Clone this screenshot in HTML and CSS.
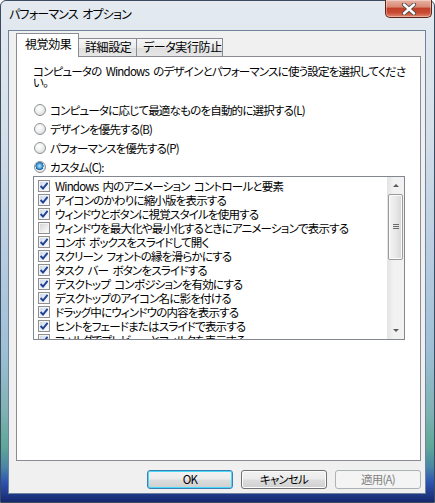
FILE: index.html
```html
<!DOCTYPE html>
<html lang="ja">
<head>
<meta charset="utf-8">
<title>パフォーマンス オプション</title>
<link rel="stylesheet" href="styles.css">
</head>
<body>
<div class="window">
  <div class="titlebar">
    <span class="title">パフォーマンス オプション</span>
    <div class="close">
      <svg width="20" height="12" viewBox="0 0 20 12">
        <path d="M5 1.5 L15 10.5 M15 1.5 L5 10.5" stroke="#4a4a4a" stroke-width="4.2" stroke-linecap="round" fill="none"/>
        <path d="M5 1.5 L15 10.5 M15 1.5 L5 10.5" stroke="#ffffff" stroke-width="2.4" stroke-linecap="round" fill="none"/>
      </svg>
    </div>
  </div>
  <div class="client">
    <div class="tabs">
      <div class="tab active">視覚効果</div>
      <div class="tab">詳細設定</div>
      <div class="tab">データ実行防止</div>
    </div>
    <div class="panel">
      <p class="desc"><span class="line">コンピュータの Windows のデザインとパフォーマンスに使う設定を選択してくださ</span><span class="line">い。</span></p>
      <div class="radios">
        <div class="radio-row"><span class="radio"></span><span>コンピュータに応じて最適なものを自動的に選択する(L)</span></div>
        <div class="radio-row"><span class="radio"></span><span>デザインを優先する(B)</span></div>
        <div class="radio-row"><span class="radio"></span><span>パフォーマンスを優先する(P)</span></div>
        <div class="radio-row"><span class="radio on"></span><span>カスタム(C):</span></div>
      </div>
      <div class="listbox">
        <div class="items">
          <div class="item"><span class="check on"></span><span>Windows 内のアニメーション コントロールと要素</span></div>
          <div class="item"><span class="check on"></span><span>アイコンのかわりに縮小版を表示する</span></div>
          <div class="item"><span class="check on"></span><span>ウィンドウとボタンに視覚スタイルを使用する</span></div>
          <div class="item"><span class="check"></span><span>ウィンドウを最大化や最小化するときにアニメーションで表示する</span></div>
          <div class="item"><span class="check on"></span><span>コンボ ボックスをスライドして開く</span></div>
          <div class="item"><span class="check on"></span><span>スクリーン フォントの縁を滑らかにする</span></div>
          <div class="item"><span class="check on"></span><span>タスク バー ボタンをスライドする</span></div>
          <div class="item"><span class="check on"></span><span>デスクトップ コンポジションを有効にする</span></div>
          <div class="item"><span class="check on"></span><span>デスクトップのアイコン名に影を付ける</span></div>
          <div class="item"><span class="check on"></span><span>ドラッグ中にウィンドウの内容を表示する</span></div>
          <div class="item"><span class="check on"></span><span>ヒントをフェードまたはスライドで表示する</span></div>
          <div class="item"><span class="check on"></span><span>フォルダでプレビューとフィルタを表示する</span></div>
        </div>
        <div class="scrollbar">
          <div class="arrow up"></div>
          <div class="thumb"><span class="grip"></span></div>
          <div class="track"></div>
          <div class="arrow down"></div>
        </div>
      </div>
    </div>
    <div class="buttons">
      <div class="btn default">OK</div>
      <div class="btn">キャンセル</div>
      <div class="btn disabled">適用(A)</div>
    </div>
  </div>
</div>
</body>
</html>
```

FILE: styles.css
```css
* { box-sizing: border-box; }
html, body { margin: 0; padding: 0; }
body {
  width: 435px;
  height: 503px;
  overflow: hidden;
  font-family: "Noto Sans CJK JP", "Noto Sans", sans-serif;
  font-size: 11.5px;
  letter-spacing: -0.8px;
  word-spacing: 2.5px;
  color: #000;
  font-feature-settings: "palt";
}
.window {
  width: 435px;
  height: 503px;
  padding: 0 8px 8px 7px;
  border: 1px solid #3b4c62;
  border-radius: 6px 6px 0 0;
  background: linear-gradient(180deg,
    #e4eaf0 0%, #d6e0e9 25%, #b9cde0 50%, #9dbfd6 70%,
    #7fb2b2 82%, #5ea797 89%, #4b86a6 93%, #2f55b0 96%, #16286f 100%);
  display: flex;
  flex-direction: column;
}
.titlebar {
  height: 29px;
  display: flex;
  justify-content: space-between;
  align-items: flex-start;
}
.title {
  margin-top: 5px;
  margin-left: 1px;
  line-height: 16px;
  font-size: 12px;
  color: #000;
}
.close {
  width: 47px;
  height: 18px;
  margin-right: -6px;
  margin-top: -1px;
  border: 1px solid #5e2518;
  border-top: none;
  border-radius: 0 0 5px 5px;
  background: linear-gradient(180deg, #e8b2a4 0%, #d98a74 40%, #c2402a 50%, #c94b33 75%, #e08a6e 100%);
  box-shadow: inset 0 0 0 1px rgba(255,255,255,0.35);
  display: flex;
  align-items: center;
  justify-content: center;
}
.client {
  flex: 1;
  background: #f0f0f0;
  border: 1px solid #6f849c;
  display: flex;
  flex-direction: column;
  padding: 2px 6px 0 7px;
}
.tabs {
  display: flex;
  align-items: flex-end;
  height: 23px;
  position: relative;
  z-index: 1;
}
.tab {
  height: 18px;
  line-height: 16px;
  padding: 0 6px;
  border: 1px solid #898c95;
  border-bottom: none;
  border-left: none;
  background: linear-gradient(180deg, #f6f6f6 0%, #ebebeb 50%, #dedede 51%, #e6e6e6 100%);
  white-space: nowrap;
  font-size: 12px;
  letter-spacing: -0.4px;
}
.tab.active {
  height: 24px;
  margin-bottom: -1px;
  line-height: 20px;
  border-left: 1px solid #898c95;
  background: #fff;
  padding: 0 8px 0 8px;
  width: 63px;
}
.tab:nth-child(2) { width: 58px; }
.tab:nth-child(3) { width: 86px; }
.panel {
  width: 405px;
  height: 405px;
  background: #fff;
  border: 1px solid #898c95;
  padding: 0 0 0 16px;
}
.desc {
  margin: 9px 0 0 0;
  line-height: 11px;
}
.desc .line {
  display: block;
  white-space: nowrap;
  height: 11px;
}
.radios {
  margin-top: 12px;
  display: flex;
  flex-direction: column;
}
.radio-row {
  height: 19px;
  display: flex;
  align-items: center;
  gap: 4px;
  padding-left: 1px;
  white-space: nowrap;
  line-height: 14px;
}
.radio {
  width: 12px;
  height: 12px;
  border-radius: 50%;
  border: 1px solid #8f9396;
  background: radial-gradient(circle at 40% 35%, #ffffff 0%, #f0f0f0 45%, #c9cbcd 100%);
  flex: none;
}
.radio.on {
  background:
    radial-gradient(circle at 45% 40%, #bfe6fb 0%, #4aa3da 30%, #1c5ca3 48%, transparent 52%),
    radial-gradient(circle at 40% 35%, #ffffff 0%, #eeeeee 50%, #cfd1d3 100%);
}
.listbox {
  width: 372px;
  height: 164px;
  border: 1px solid #828790;
  display: flex;
  overflow: hidden;
  background: #fff;
}
.items {
  flex: 1;
  padding-top: 2px;
  padding-left: 4px;
  overflow: hidden;
}
.item {
  height: 14px;
  display: flex;
  align-items: center;
  gap: 5px;
  white-space: nowrap;
  line-height: 14px;
}
.check {
  width: 12px;
  height: 12px;
  flex: none;
  border: 1px solid #8f8f8f;
  background: linear-gradient(135deg, #d0d0d0 0%, #eeeeee 60%, #ffffff 100%);
  box-shadow: inset 0 0 0 1px #f4f4f4;
}
.check.on {
  background:
    url("data:image/svg+xml,%3Csvg xmlns='http://www.w3.org/2000/svg' width='10' height='10' viewBox='0 0 10 10'%3E%3Cpath d='M1.6 5 L4 7.6 L8.6 1.8' stroke='%231f3f96' stroke-width='1.9' fill='none'/%3E%3C/svg%3E") center/10px 10px no-repeat,
    linear-gradient(135deg, #c9d7ea 0%, #e9eff7 60%, #ffffff 100%);
}
.scrollbar {
  width: 17px;
  flex: none;
  display: flex;
  flex-direction: column;
  background: linear-gradient(90deg, #e3e3e3 0%, #f2f2f2 40%, #f2f2f2 100%);
}
.arrow {
  height: 17px;
  flex: none;
  display: flex;
  align-items: center;
  justify-content: center;
}
.arrow::before {
  content: "";
  border-left: 3px solid transparent;
  border-right: 3px solid transparent;
}
.arrow.up::before { border-bottom: 3px solid #5a5a5a; }
.arrow.down::before { border-top: 3px solid #5a5a5a; }
.thumb {
  height: 66px;
  margin: 0 1px;
  border: 1px solid #9a9a9a;
  border-radius: 2px;
  background: linear-gradient(90deg, #f4f4f4 0%, #e9e9e9 50%, #d6d6d6 100%);
  box-shadow: inset 0 0 0 1px #fbfbfb;
  display: flex;
  align-items: center;
  justify-content: center;
}
.grip {
  width: 6px;
  height: 6px;
  background: repeating-linear-gradient(180deg, #6b6b6b 0, #6b6b6b 1px, transparent 1px, transparent 2px);
}
.track { flex: 1; }
.buttons {
  display: flex;
  justify-content: flex-end;
  gap: 8px;
  margin-top: 9px;
  width: 405px;
}
.btn {
  width: 86px;
  height: 19px;
  border: 1px solid #707070;
  border-radius: 3px;
  background: linear-gradient(180deg, #f2f2f2 0%, #ebebeb 48%, #dddddd 52%, #cfcfcf 100%);
  box-shadow: inset 0 0 0 1px #fcfcfc;
  text-align: center;
  line-height: 17px;
}
.btn.default {
  border-color: #3c7fb1;
  box-shadow: inset 0 0 0 1px #48d9fb;
}
.btn.disabled {
  border-color: #adb2b5;
  background: #f4f4f4;
  box-shadow: none;
  color: #838383;
}
```
